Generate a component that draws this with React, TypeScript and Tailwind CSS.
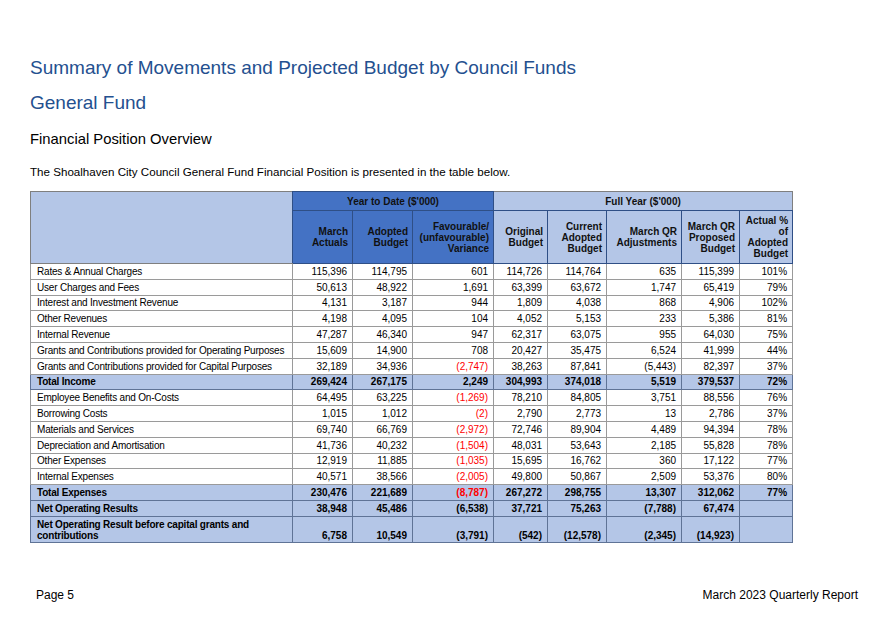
import React from 'react'

type Row = {
    label: string
    values: string[]
    kind?: 'total' | 'tall'
    red?: number[]
}

const rows: Row[] = [
    { label: 'Rates & Annual Charges', values: ['115,396', '114,795', '601', '114,726', '114,764', '635', '115,399', '101%'] },
    { label: 'User Charges and Fees', values: ['50,613', '48,922', '1,691', '63,399', '63,672', '1,747', '65,419', '79%'] },
    { label: 'Interest and Investment Revenue', values: ['4,131', '3,187', '944', '1,809', '4,038', '868', '4,906', '102%'] },
    { label: 'Other Revenues', values: ['4,198', '4,095', '104', '4,052', '5,153', '233', '5,386', '81%'] },
    { label: 'Internal Revenue', values: ['47,287', '46,340', '947', '62,317', '63,075', '955', '64,030', '75%'] },
    { label: 'Grants and Contributions provided for Operating Purposes', values: ['15,609', '14,900', '708', '20,427', '35,475', '6,524', '41,999', '44%'] },
    { label: 'Grants and Contributions provided for Capital Purposes', values: ['32,189', '34,936', '(2,747)', '38,263', '87,841', '(5,443)', '82,397', '37%'], red: [2] },
    { label: 'Total Income', values: ['269,424', '267,175', '2,249', '304,993', '374,018', '5,519', '379,537', '72%'], kind: 'total' },
    { label: 'Employee Benefits and On-Costs', values: ['64,495', '63,225', '(1,269)', '78,210', '84,805', '3,751', '88,556', '76%'], red: [2] },
    { label: 'Borrowing Costs', values: ['1,015', '1,012', '(2)', '2,790', '2,773', '13', '2,786', '37%'], red: [2] },
    { label: 'Materials and Services', values: ['69,740', '66,769', '(2,972)', '72,746', '89,904', '4,489', '94,394', '78%'], red: [2] },
    { label: 'Depreciation and Amortisation', values: ['41,736', '40,232', '(1,504)', '48,031', '53,643', '2,185', '55,828', '78%'], red: [2] },
    { label: 'Other Expenses', values: ['12,919', '11,885', '(1,035)', '15,695', '16,762', '360', '17,122', '77%'], red: [2] },
    { label: 'Internal Expenses', values: ['40,571', '38,566', '(2,005)', '49,800', '50,867', '2,509', '53,376', '80%'], red: [2] },
    { label: 'Total Expenses', values: ['230,476', '221,689', '(8,787)', '267,272', '298,755', '13,307', '312,062', '77%'], kind: 'total', red: [2] },
    { label: 'Net Operating Results', values: ['38,948', '45,486', '(6,538)', '37,721', '75,263', '(7,788)', '67,474', ''], kind: 'total' },
    { label: 'Net Operating Result before capital grants and contributions', values: ['6,758', '10,549', '(3,791)', '(542)', '(12,578)', '(2,345)', '(14,923)', ''], kind: 'tall' },
]

const widths = ['w-[262px]', 'w-[60px]', 'w-[60px]', 'w-[81px]', 'w-[54px]', 'w-[59px]', 'w-[75px]', 'w-[58px]', 'w-[53px]']

function HeadCell({ children, dark }: { children: React.ReactNode; dark?: boolean }) {
    return (
        <th
            className={`border border-[#2f4f86] px-[4px] text-right align-middle font-bold leading-[11px] whitespace-nowrap text-[#111] ${dark ? 'bg-[#4472c4]' : 'bg-[#b4c6e7]'}`}
        >
            {children}
        </th>
    )
}

export default function App() {
    return (
        <div className="w-[888px] h-[628px] bg-white font-['Liberation_Sans',Arial,sans-serif] text-black">
            <div className="pl-[30px] pr-[30px] pt-[56px] flex flex-col">
                {/* Headings */}
                <h1 className="text-[19px] leading-[24px] text-[#24508f]">
                    Summary of Movements and Projected Budget by Council Funds
                </h1>
                <h2 className="mt-[11px] text-[19px] leading-[24px] text-[#24508f]">General Fund</h2>
                <h3 className="mt-[15px] text-[14.8px] leading-[18px]">Financial Position Overview</h3>
                <p className="mt-[17px] text-[11.6px] leading-[14px]">
                    The Shoalhaven City Council General Fund Financial Position is presented in the table below.
                </p>

                {/* Table */}
                <table className="mt-[12px] w-[762px] table-fixed border-collapse text-[10px]">
                    <colgroup>
                        {widths.map((w, i) => (
                            <col key={i} className={w} />
                        ))}
                    </colgroup>
                    <thead>
                        <tr className="h-[19px]">
                            <th rowSpan={2} className="border border-[#7f7f7f] border-r-[#2f4f86] bg-[#b4c6e7]" />
                            <th colSpan={3} className="border border-[#2f4f86] bg-[#4472c4] text-center font-bold text-[#111]">
                                Year to Date ($'000)
                            </th>
                            <th colSpan={5} className="border border-[#2f4f86] border-t-[#7f7f7f] border-r-[#7f7f7f] bg-[#b4c6e7] text-center font-bold text-[#111]">
                                Full Year ($'000)
                            </th>
                        </tr>
                        <tr className="h-[53px]">
                            <HeadCell dark>March<br />Actuals</HeadCell>
                            <HeadCell dark>Adopted<br />Budget</HeadCell>
                            <HeadCell dark>Favourable/<br />(unfavourable)<br />Variance</HeadCell>
                            <HeadCell>Original<br />Budget</HeadCell>
                            <HeadCell>Current<br />Adopted<br />Budget</HeadCell>
                            <HeadCell>March QR<br />Adjustments</HeadCell>
                            <HeadCell>March QR<br />Proposed<br />Budget</HeadCell>
                            <HeadCell>Actual %<br />of<br />Adopted<br />Budget</HeadCell>
                        </tr>
                    </thead>
                    <tbody>
                        {rows.map((row) => {
                            const blue = row.kind === 'total' || row.kind === 'tall'
                            const tall = row.kind === 'tall'
                            return (
                                <tr key={row.label} className={tall ? 'h-[26px]' : 'h-[15.8px]'}>
                                    <td
                                        className={`border px-[6px] leading-[11px] tracking-[-0.2px] ${blue ? 'border-[#5f7396] bg-[#b4c6e7] font-bold' : 'border-[#9a9a9a] whitespace-nowrap'} ${tall ? 'align-bottom pb-[1px]' : 'align-middle'}`}
                                    >
                                        {row.label}
                                    </td>
                                    {row.values.map((v, i) => (
                                        <td
                                            key={i}
                                            className={`border px-[5px] text-right leading-[11px] ${blue ? 'border-[#5f7396] bg-[#b4c6e7] font-bold' : 'border-[#9a9a9a]'} ${tall ? 'align-bottom pb-[1px]' : 'align-middle'} ${row.red?.includes(i) ? 'text-[#ff0000]' : ''}`}
                                        >
                                            {v}
                                        </td>
                                    ))}
                                </tr>
                            )
                        })}
                    </tbody>
                </table>

                {/* Footer */}
                <div className="mt-[45px] flex justify-between pl-[6px] text-[12px] leading-[14px]">
                    <span>Page 5</span>
                    <span>March 2023 Quarterly Report</span>
                </div>
            </div>
        </div>
    )
}
